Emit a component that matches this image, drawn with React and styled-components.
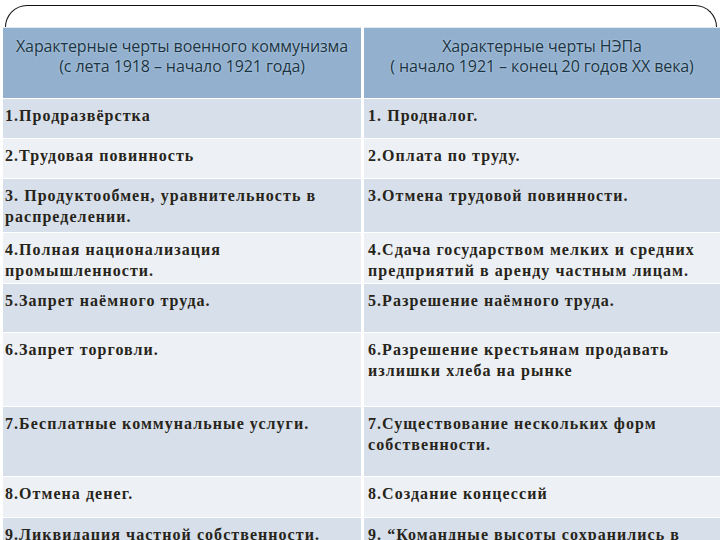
import React from "react";
import styled, { createGlobalStyle } from "styled-components";

const GlobalStyle = createGlobalStyle`
  html, body {
    margin: 0;
    padding: 0;
    background: #ffffff;
  }
`;

const rows = [
  ["1.Продразвёрстка", "1. Продналог.", 39],
  ["2.Трудовая повинность", "2.Оплата по труду.", 39],
  ["3. Продуктообмен, уравнительность в распределении.", "3.Отмена трудовой повинности.", 53],
  ["4.Полная национализация промышленности.", "4.Сдача государством мелких и средних предприятий в аренду частным лицам.", 50],
  ["5.Запрет наёмного труда.", "5.Разрешение наёмного труда.", 48],
  ["6.Запрет торговли.", "6.Разрешение крестьянам продавать излишки хлеба на рынке", 73],
  ["7.Бесплатные коммунальные услуги.", "7.Существование нескольких форм собственности.", 69],
  ["8.Отмена денег.", "8.Создание концессий", 40],
  ["9.Ликвидация частной собственности.", "9. “Командные высоты сохранились в", 40],
];

const App = () => {
  return (
    <Page>
      <GlobalStyle />
      <Frame />
      <Table>
        <HeadCell>
          Характерные черты военного коммунизма
          <br />
          (с лета 1918 – начало 1921 года)
        </HeadCell>
        <HeadCell>
          Характерные черты НЭПа
          <br />( начало 1921 – конец 20 годов XX века)
        </HeadCell>
        {rows.map(([left, right, h], i) => (
          <React.Fragment key={i}>
            <Cell $dark={i % 2 === 0} $h={h}>{left}</Cell>
            <Cell $dark={i % 2 === 0} $h={h} $right>{right}</Cell>
          </React.Fragment>
        ))}
      </Table>
    </Page>
  );
};

const Page = styled.div`
  width: 720px;
  height: 540px;
  overflow: hidden;
`;

const Frame = styled.div`
  box-sizing: border-box;
  margin: 5px 3px 0 5px;
  height: 22px;
  border: 1px solid #111;
  border-bottom: none;
  border-radius: 26px 26px 0 0;
`;

const Table = styled.div`
  display: grid;
  grid-template-columns: 358px 1fr;
  column-gap: 3px;
  row-gap: 1px;
  padding-left: 3px;
  background: #ffffff;
`;

const HeadCell = styled.div`
  box-sizing: border-box;
  height: 71px;
  padding-top: 8px;
  background: #93b1cf;
  border-top: 1px solid #dfe9f2;
  color: #1a3444;
  font-family: "Open Sans", "Noto Sans", sans-serif;
  font-size: 16px;
  line-height: 20px;
  text-align: center;
  letter-spacing: -0.1px;
  text-shadow: 0 0 2px rgba(220, 232, 240, 0.7);
`;

const Cell = styled.div`
  box-sizing: border-box;
  height: ${(p) => p.$h}px;
  padding: 6px 4px 0 ${(p) => (p.$right ? "4px" : "2px")};
  background: ${(p) => (p.$dark ? "#d7e0ea" : "#edf1f6")};
  color: #27241a;
  font-family: "Liberation Serif", "DejaVu Serif", serif;
  font-weight: bold;
  font-size: 16px;
  line-height: 21px;
  letter-spacing: 1.05px;
  overflow: hidden;
`;

export default App;
